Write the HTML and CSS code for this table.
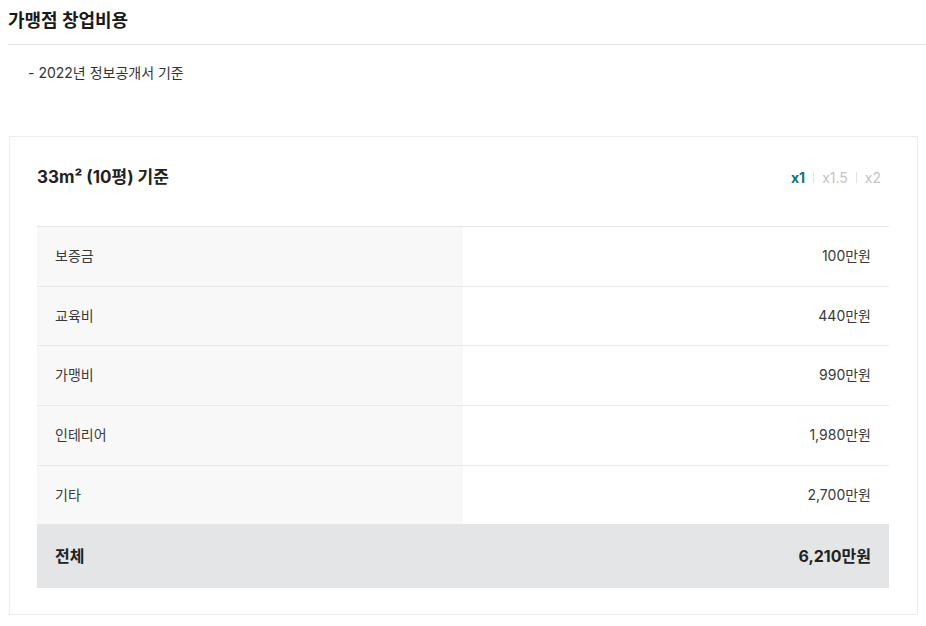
FILE: index.html
```html
<!DOCTYPE html>
<html lang="ko">
<head>
<meta charset="utf-8">
<link rel="stylesheet" href="styles.css">
</head>
<body>
<section class="cost">
  <h2 class="cost-title">가맹점 창업비용</h2>
  <p class="cost-note">- 2022년 정보공개서 기준</p>
  <div class="card">
    <div class="card-head">
      <h3 class="card-title">33m² (10평) 기준</h3>
      <div class="scale">
        <span class="scale-opt active">x1</span>
        <span class="scale-sep"></span>
        <span class="scale-opt">x1.5</span>
        <span class="scale-sep"></span>
        <span class="scale-opt">x2</span>
      </div>
    </div>
    <div class="table">
      <div class="row"><div class="cell label">보증금</div><div class="cell value">100만원</div></div>
      <div class="row short"><div class="cell label">교육비</div><div class="cell value">440만원</div></div>
      <div class="row"><div class="cell label">가맹비</div><div class="cell value">990만원</div></div>
      <div class="row"><div class="cell label">인테리어</div><div class="cell value">1,980만원</div></div>
      <div class="row short"><div class="cell label">기타</div><div class="cell value">2,700만원</div></div>
      <div class="row total"><div class="cell label">전체</div><div class="cell value">6,210만원</div></div>
    </div>
  </div>
</section>
</body>
</html>
```
FILE: styles.css
```css
* { box-sizing: border-box; }
body {
  margin: 0;
  background: #fff;
  font-family: Inter, "Noto Sans CJK KR", sans-serif;
  color: #222;
}
.cost { padding-left: 8px; }
.cost-title {
  margin: 0;
  height: 45px;
  padding-top: 9px;
  font-size: 18px;
  font-weight: 700;
  line-height: 24px;
  color: #1a1a1a;
  border-bottom: 1px solid #e3e3e3;
}
.cost-note {
  margin: 0;
  padding: 18px 0 0 20px;
  height: 91px;
  font-size: 14px;
  line-height: 20px;
  color: #333;
}
.card {
  margin-left: 1px;
  width: 909px;
  border: 1px solid #ededed;
  padding: 0 28px 26px 27px;
}
.card-head {
  height: 89px;
  display: flex;
  align-items: flex-start;
  justify-content: space-between;
  padding: 28px 8px 0 0;
}
.card-title {
  margin: 0;
  font-size: 17px;
  line-height: 24px;
  font-weight: 700;
  color: #222;
}
.scale {
  display: flex;
  align-items: center;
  gap: 8px;
  height: 24px;
  font-size: 14px;
}
.scale-opt { color: #c4c4c4; }
.scale-opt.active { color: #0b747c; font-weight: 700; }
.scale-sep {
  width: 1px;
  height: 11px;
  background: #e3e3e3;
}
.table { border-top: 1px solid #e6e6e6; }
.row {
  display: flex;
  height: 60px;
  border-top: 1px solid #e9e9e9;
}
.row.short { height: 59px; }
.row:first-child { border-top: none; height: 59px; }
.cell {
  flex: 1;
  display: flex;
  align-items: center;
  padding: 0 18px 3px;
  font-size: 14px;
  color: #3a3a3a;
}
.label { background: #f8f8f8; }
.value { justify-content: flex-end; background: #fff; }
.row.total {
  height: 64px;
  border-top: none;
  background: #e4e5e7;
}
.row.total .cell {
  background: transparent;
  padding-bottom: 2px;
  font-size: 16px;
  font-weight: 700;
  color: #222;
}
```
